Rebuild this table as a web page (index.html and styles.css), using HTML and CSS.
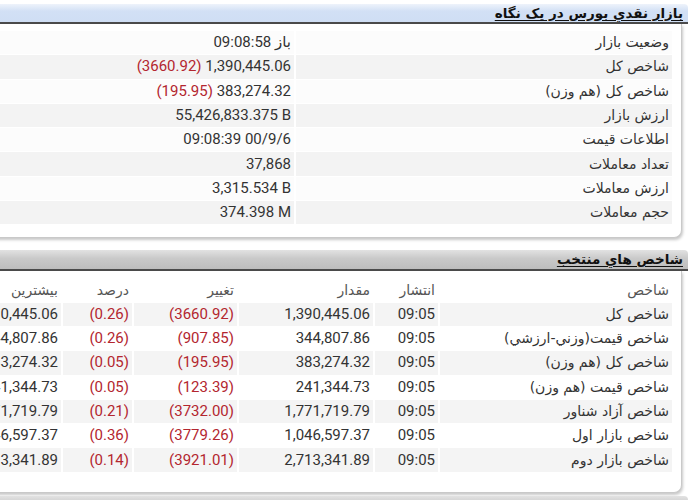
FILE: index.html
```html
<!DOCTYPE html>
<html lang="fa">
<head>
<meta charset="utf-8">
<link rel="stylesheet" href="styles.css">
</head>
<body>
<div class="page">
  <section class="panel">
    <div class="head head-blue">بازار نقدي بورس در یک نگاه</div>
    <div class="body body-market">
      <table class="grid market">
        <colgroup><col class="c-label"><col></colgroup>
        <tr><td class="lbl">وضعیت بازار</td><td class="num">09:08:58 باز</td></tr>
        <tr><td class="lbl">شاخص کل</td><td class="num"><span class="neg">(3660.92)</span> 1,390,445.06</td></tr>
        <tr><td class="lbl">شاخص کل (هم وزن)</td><td class="num"><span class="neg">(195.95)</span> 383,274.32</td></tr>
        <tr><td class="lbl">ارزش بازار</td><td class="num">55,426,833.375 B</td></tr>
        <tr><td class="lbl">اطلاعات قیمت</td><td class="num">09:08:39 00/9/6</td></tr>
        <tr><td class="lbl">تعداد معاملات</td><td class="num">37,868</td></tr>
        <tr><td class="lbl">ارزش معاملات</td><td class="num">3,315.534 B</td></tr>
        <tr><td class="lbl">حجم معاملات</td><td class="num">374.398 M</td></tr>
      </table>
    </div>
  </section>

  <section class="panel panel-second">
    <div class="head head-gray">شاخص هاي منتخب</div>
    <div class="body body-index">
      <table class="grid indices">
        <colgroup>
          <col class="c-name"><col class="c-time"><col class="c-val"><col class="c-chg"><col class="c-pct"><col>
        </colgroup>
        <tr class="th"><td class="lbl">شاخص</td><td class="lbl">انتشار</td><td class="lbl">مقدار</td><td class="lbl">تغییر</td><td class="lbl">درصد</td><td class="lbl">بیشترین</td></tr>
        <tr><td class="lbl">شاخص کل</td><td class="num">09:05</td><td class="num">1,390,445.06</td><td class="num neg">(3660.92)</td><td class="num neg">(0.26)</td><td class="num">1,390,445.06</td></tr>
        <tr><td class="lbl">شاخص قیمت(وزني-ارزشي)</td><td class="num">09:05</td><td class="num">344,807.86</td><td class="num neg">(907.85)</td><td class="num neg">(0.26)</td><td class="num">344,807.86</td></tr>
        <tr><td class="lbl">شاخص کل (هم وزن)</td><td class="num">09:05</td><td class="num">383,274.32</td><td class="num neg">(195.95)</td><td class="num neg">(0.05)</td><td class="num">383,274.32</td></tr>
        <tr><td class="lbl">شاخص قیمت (هم وزن)</td><td class="num">09:05</td><td class="num">241,344.73</td><td class="num neg">(123.39)</td><td class="num neg">(0.05)</td><td class="num">241,344.73</td></tr>
        <tr><td class="lbl">شاخص آزاد شناور</td><td class="num">09:05</td><td class="num">1,771,719.79</td><td class="num neg">(3732.00)</td><td class="num neg">(0.21)</td><td class="num">1,771,719.79</td></tr>
        <tr><td class="lbl">شاخص بازار اول</td><td class="num">09:05</td><td class="num">1,046,597.37</td><td class="num neg">(3779.26)</td><td class="num neg">(0.36)</td><td class="num">1,046,597.37</td></tr>
        <tr><td class="lbl">شاخص بازار دوم</td><td class="num">09:05</td><td class="num">2,713,341.89</td><td class="num neg">(3921.01)</td><td class="num neg">(0.14)</td><td class="num">2,713,341.89</td></tr>
      </table>
    </div>
  </section>

  <section class="panel panel-third">
    <div class="head head-gray"></div>
  </section>
</div>
</body>
</html>
```

FILE: styles.css
```css
html, body {
  margin: 0;
  padding: 0;
  background: #ffffff;
  overflow: hidden;
}

body {
  font-family: Roboto, "DejaVu Sans", sans-serif;
  color: #333333;
}

.page {
  direction: rtl;
  width: 690px;
  height: 500px;
  padding-top: 4px;
  box-sizing: border-box;
  overflow: hidden;
}

.panel {
  width: 772px;
  margin-right: 2px;
}

.panel-second {
  margin-top: 12px;
}

.panel-third {
  margin-top: 3px;
}

.head {
  height: 18px;
  line-height: 18px;
  padding-right: 5px;
  font-family: "DejaVu Sans", sans-serif;
  font-weight: bold;
  font-size: 13.5px;
  color: #111111;
  text-decoration: underline;
  text-underline-offset: 2px;
  border-bottom: 2px solid #4b4b4b;
  border-radius: 4px 4px 0 0;
}

.head-blue {
  background: linear-gradient(#eef3fb, #d2e0f5 40%, #cfdef4);
}

.head-gray {
  height: 19px;
  line-height: 19px;
  background: linear-gradient(#e2e2e2, #c9c9c9 45%, #bdbdbd);
}

.body {
  margin-right: 6px;
  border-right: 1px solid #c9c9c9;
  border-bottom: 1px solid #c9c9c9;
  border-bottom-right-radius: 8px;
  box-shadow: 1px 2px 3px rgba(0, 0, 0, 0.22);
  background: #ffffff;
}

.body-market {
  padding: 6px 7px 12px 0;
}

.body-index {
  padding: 6px 7px 19px 0;
}

.grid {
  width: 100%;
  border-collapse: separate;
  border-spacing: 2px 1px;
  table-layout: fixed;
}

.grid td {
  height: 23.3px;
  padding: 0 3px 0 3px;
  white-space: nowrap;
  overflow: hidden;
  font-size: 15px;
  line-height: 23px;
  box-sizing: border-box;
}

.grid .lbl {
  font-family: "DejaVu Sans", sans-serif;
  font-size: 14px;
  text-align: right;
  color: #333333;
}

.grid .num {
  direction: ltr;
  text-align: right;
  color: #333333;
}

.market tr:nth-child(even) td {
  background: #f3f3f3;
}

.market tr:nth-child(odd) td {
  background: #fcfcfc;
}

.c-label { width: 376px; }

.indices tr:nth-child(even) td {
  background: #f4f4f4;
}

.indices .th td {
  color: #555555;
  background: #ffffff;
}

.c-name { width: 232px; }
.c-time { width: 63px; }
.c-val { width: 134px; }
.c-chg { width: 103px; }
.c-pct { width: 69px; }

.neg {
  color: #b3262f;
}

.grid .num.neg {
  color: #b3262f;
}
```
